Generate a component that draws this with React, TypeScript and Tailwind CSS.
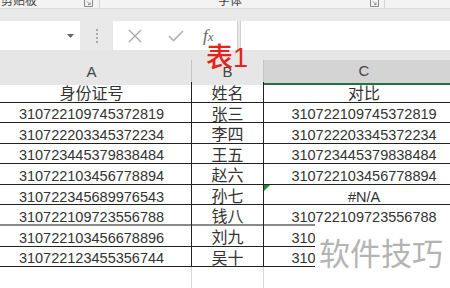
const rows: [string, string, string][] = [
  ['310722109745372819', '张三', '310722109745372819'],
  ['310722203345372234', '李四', '310722203345372234'],
  ['310723445379838484', '王五', '310723445379838484'],
  ['310722103456778894', '赵六', '310722103456778894'],
  ['310722345689976543', '孙七', '#N/A'],
  ['310722109723556788', '钱八', '310722109723556788'],
  ['310722103456678896', '刘九', '310722103456678896'],
  ['310722123455356744', '吴十', '310722123455356744'],
]

const font = { fontFamily: '"Liberation Sans", "Noto Sans CJK SC", sans-serif' }

function Launcher() {
  return (
    <svg width="9" height="7" viewBox="0 0 9 7" className="text-[#888]">
      <path d="M0.5 0 V6.5 H8.5 V0" fill="none" stroke="currentColor" strokeWidth="1" />
      <path d="M3 1.5 L6 4.5 M6 2.5 V4.5 H4" fill="none" stroke="currentColor" strokeWidth="0.9" />
    </svg>
  )
}

export default function App() {
  return (
    <div className="relative w-[450px] h-[288px] overflow-hidden bg-white text-[#333]" style={font}>
      {/* ribbon group labels */}
      <div className="h-[9px] bg-[#f3f3f3] border-b border-[#dcdcdc] flex items-end text-[12px] text-[#444] leading-none overflow-hidden">
        <div className="w-[100px] h-full border-r border-[#d6d6d6] flex items-end relative">
          <span className="ml-[1px] mb-[1px]">剪贴板</span>
          <span className="absolute left-[84px] top-0"><Launcher /></span>
        </div>
        <div className="w-[285px] h-full border-r border-[#d6d6d6] flex items-end relative">
          <span className="ml-[118px] mb-[1px]">字体</span>
          <span className="absolute left-[270px] top-0"><Launcher /></span>
        </div>
      </div>
      <div className="h-[12px] bg-[#e9e9e9]" />

      {/* formula bar */}
      <div className="h-[29px] bg-[#e9e9e9] flex">
        <div className="w-[80px] bg-white flex items-center justify-end pr-[6px]">
          <svg width="7" height="4" viewBox="0 0 7 4"><path d="M0 0 H7 L3.5 4 Z" fill="#666" /></svg>
        </div>
        <div className="w-[33px] flex flex-col items-center justify-center gap-[2px]">
          <span className="w-[2px] h-[2px] bg-[#aaa]" />
          <span className="w-[2px] h-[2px] bg-[#aaa]" />
          <span className="w-[2px] h-[2px] bg-[#aaa]" />
          <span className="w-[2px] h-[2px] bg-[#aaa]" />
        </div>
        <div className="w-[124px] bg-white flex items-center">
          <svg width="14" height="14" viewBox="0 0 14 14" className="ml-[15px]">
            <path d="M1 1 L13 13 M13 1 L1 13" stroke="#a8a8a8" strokeWidth="1.3" fill="none" />
          </svg>
          <svg width="16" height="12" viewBox="0 0 16 12" className="ml-[26px]">
            <path d="M1 6 L5.5 10.5 L15 1" stroke="#b0b0b0" strokeWidth="1.6" fill="none" />
          </svg>
          <span
            className="ml-[19px] text-[17px] italic text-[#666] leading-none"
            style={{ fontFamily: '"Liberation Serif", serif' }}
          >
            f<span className="text-[13px]">x</span>
          </span>
        </div>
        <div className="w-[3px] border-l border-[#d0d0d0]" />
        <div className="flex-1 bg-white border-l border-[#d0d0d0]" />
      </div>
      <div className="h-[10px] bg-[#e6e6e6]" />

      {/* column headers */}
      <div className="ml-[-8px] grid grid-cols-[200px_72px_200px] h-[21px] text-[15px] text-[#444]">
        <div className="bg-[#e6e6e6] border-r border-[#c4c4c4] flex items-center justify-center">A</div>
        <div className="bg-[#e6e6e6] border-r border-[#c4c4c4] flex items-center justify-center">B</div>
        <div className="bg-[#d4d4d4] border-b-2 border-[#217346] flex items-center justify-center">C</div>
      </div>

      {/* table */}
      <div className="ml-[-8px] w-[480px] border-t border-[#222]">
        <div className="grid grid-cols-[200px_72px_208px] h-[20.5px] border-b border-[#222] text-[16px]">
          <div className="border-r border-[#222] flex items-center justify-center">身份证号</div>
          <div className="border-r border-[#222] flex items-center justify-center">姓名</div>
          <div className="flex items-center justify-center pr-[8px]">对比</div>
        </div>
        {rows.map(([id, name, cmp], i) => (
          <div
            key={id}
            className={
              i === 5
                ? 'grid grid-cols-[200px_72px_208px] h-[20.6px] border-b-2 border-[#8a8a8a] text-[14.5px]'
                : 'grid grid-cols-[200px_72px_208px] h-[20.6px] border-b border-[#222] text-[14.5px]'
            }
          >
            <div className="border-r border-[#222] flex items-center justify-center pt-[1px]">{id}</div>
            <div className="border-r border-[#222] flex items-center justify-center text-[16px]">{name}</div>
            <div className="relative flex items-center justify-center pt-[1px] pr-[8px]">
              {i === 4 && (
                <svg width="6" height="6" viewBox="0 0 6 6" className="absolute left-0 top-0">
                  <path d="M0 0 H6 L0 6 Z" fill="#1e8a3c" />
                </svg>
              )}
              {cmp}
            </div>
          </div>
        ))}
        <div className="grid grid-cols-[200px_72px_208px] h-[30px]">
          <div className="border-r border-[#d9d9d9]" />
          <div className="border-r border-[#d9d9d9]" />
          <div />
        </div>
      </div>

      {/* overlay label */}
      <div className="absolute left-[206px] top-[45px] text-[27px] leading-none text-[#e5231b] font-medium">表1</div>

      {/* watermark */}
      <div className="absolute left-[315px] top-[222px] w-[135px] h-[66px] bg-white flex items-start pt-[17px] pl-[4px]">
        <span className="text-[31px] leading-none text-[#b4b4b4]">软件技巧</span>
      </div>
    </div>
  )
}
